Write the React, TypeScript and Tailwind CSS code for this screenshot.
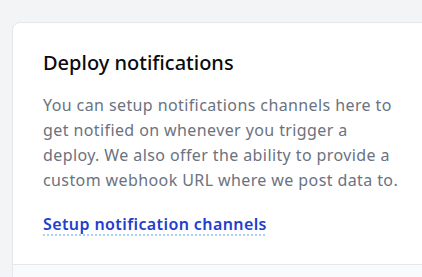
export default function App() {
  return (
    <div className="w-[422px] h-[277px] overflow-hidden bg-[#f3f4f6] pl-3 pt-[22px] font-['Noto_Sans',sans-serif]">
      <div className="w-[450px] rounded-lg border border-[#e5e7eb] bg-white overflow-hidden">
        <div className="pl-[30px] pt-[26px] pb-[28px] border-b border-[#e5e7eb]">
          <h2 className="text-[20px] leading-7 font-medium text-[#0b0b0b]">Deploy notifications</h2>
          <p className="mt-[16px] w-[362px] text-[16px] leading-[25px] tracking-[0.4px] text-[#6b7280]">
            You can setup notifications channels here to get notified on whenever you trigger a deploy. We also offer the ability to provide a custom webhook URL where we post data to.
          </p>
          <a
            href="#"
            className="mt-[19px] inline-block text-[16px] leading-6 font-semibold tracking-[0.4px] text-[#1f40cc] underline decoration-dotted decoration-[#93c5fd] underline-offset-[5px]"
          >
            Setup notification channels
          </a>
        </div>
        <div className="h-10 bg-[#f9fafb]" />
      </div>
    </div>
  );
}
